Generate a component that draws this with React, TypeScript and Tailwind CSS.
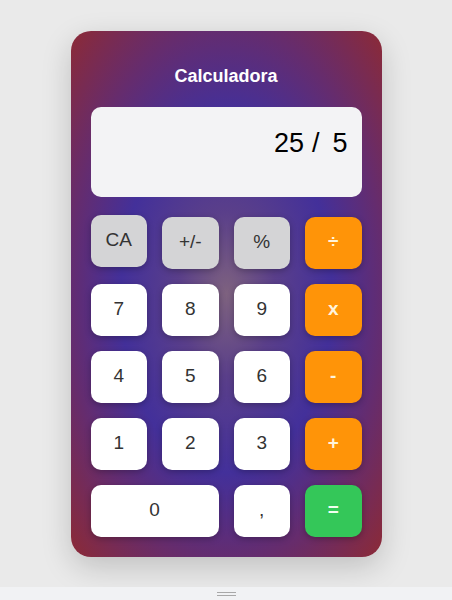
import React from "react";

type Btn = { label: string; kind: "gray" | "white" | "orange" | "green"; wide?: boolean; lift?: boolean };

const rows: Btn[] = [
  { label: "CA", kind: "gray", lift: true },
  { label: "+/-", kind: "gray" },
  { label: "%", kind: "gray" },
  { label: "÷", kind: "orange" },
  { label: "7", kind: "white" },
  { label: "8", kind: "white" },
  { label: "9", kind: "white" },
  { label: "x", kind: "orange" },
  { label: "4", kind: "white" },
  { label: "5", kind: "white" },
  { label: "6", kind: "white" },
  { label: "-", kind: "orange" },
  { label: "1", kind: "white" },
  { label: "2", kind: "white" },
  { label: "3", kind: "white" },
  { label: "+", kind: "orange" },
  { label: "0", kind: "white", wide: true },
  { label: ",", kind: "white" },
  { label: "=", kind: "green" },
];

function Key({ b }: { b: Btn }) {
  const base =
    "h-[52px] rounded-[10px] flex items-center justify-center text-[19px] shadow-[0_2px_6px_rgba(0,0,0,0.25)]";
  const color =
    b.kind === "gray"
      ? "bg-[#d4d4d6] text-[#333333]"
      : b.kind === "white"
      ? "bg-white text-[#333333]"
      : b.kind === "orange"
      ? "bg-[#ff9408] text-[#fff4dc] font-bold text-[17px]"
      : "bg-[#34c759] text-[#f2fff2] font-bold text-[17px]";
  return (
    <div
      className={`${base} ${color} ${b.wide ? "col-span-2" : ""} ${b.lift ? "-translate-y-[2px]" : ""}`}
    >
      {b.label}
    </div>
  );
}

export default function App() {
  return (
    <div className="w-[452px] h-[600px] flex flex-col bg-[#eaeaea]" style={{ fontFamily: '"Liberation Sans", Arial, sans-serif' }}>
      <div className="h-[587px] flex items-center justify-center">
        <div
          className="w-[311px] h-[526px] rounded-[20px] px-[20px] pt-[31px] shadow-[0_10px_30px_rgba(0,0,0,0.18)] flex flex-col"
          style={{
            background:
              "radial-gradient(ellipse at center, #7e627f 0%, #5a3f8a 22%, #43309a 48%, #652c6e 72%, #8c2a36 100%)",
          }}
        >
          <div className="h-[28px] leading-[28px] text-center text-white font-bold text-[18px]">Calculadora</div>
          <div className="mt-[17px] h-[90px] rounded-[10px] bg-[#f3f3f5] pr-[14px] pt-[20px] flex justify-end items-start text-[27px] leading-[32px] text-black">
            <span>25</span>
            <span className="ml-[8px]">/</span>
            <span className="ml-[13px]">5</span>
          </div>
          <div className="mt-[20px] grid grid-cols-4 gap-x-[15px] gap-y-[15px]">
            {rows.map((b, i) => (
              <Key key={i} b={b} />
            ))}
          </div>
        </div>
      </div>
      <div className="h-[13px] bg-[#f1f2f4] flex flex-col items-center justify-center gap-[2px]">
        <div className="w-[19px] h-[1px] bg-[#a8a8a8]" />
        <div className="w-[19px] h-[1px] bg-[#a8a8a8]" />
      </div>
    </div>
  );
}
